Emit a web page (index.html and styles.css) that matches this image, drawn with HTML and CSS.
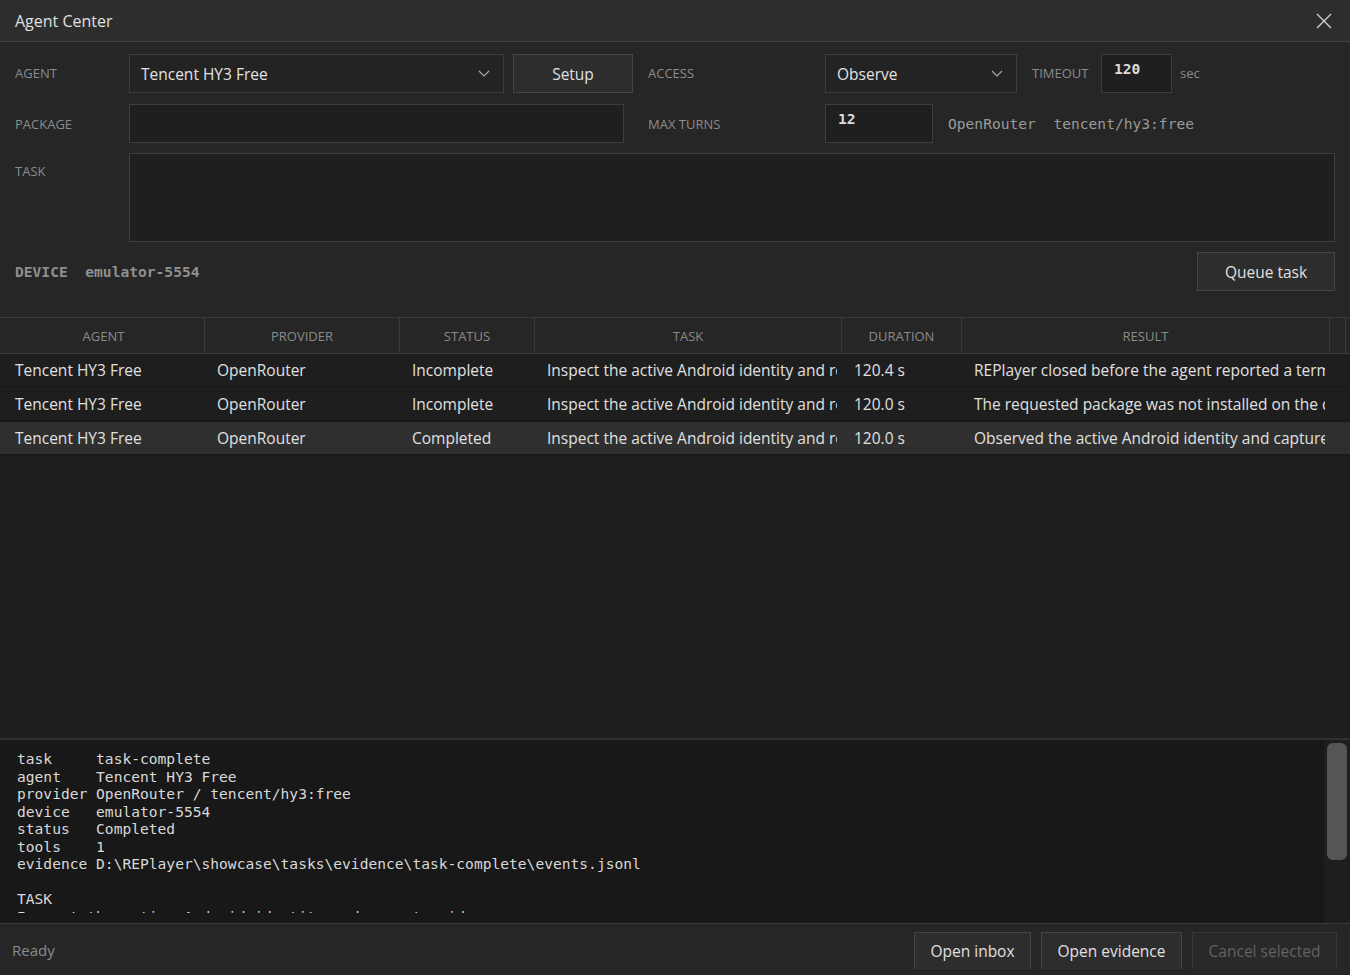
FILE: index.html
```html
<!DOCTYPE html>
<html lang="en">
<head>
    <meta charset="UTF-8">
    <title>Agent Center</title>
    <link rel="stylesheet" href="styles.css">
</head>
<body>
    <div class="window">
        <div class="titlebar">
            <span class="title">Agent Center</span>
            <svg class="close" width="16" height="16" viewBox="0 0 16 16">
                <path d="M1 1 L15 15 M15 1 L1 15" stroke="#cfcfcf" stroke-width="1.4" fill="none"/>
            </svg>
        </div>

        <div class="form">
            <div class="row row-first">
                <span class="label w-label">Agent</span>
                <div class="combo w-agent">
                    <span>Tencent HY3 Free</span>
                    <svg class="chev" width="12" height="7" viewBox="0 0 12 7"><path d="M1 1 L6 6 L11 1" stroke="#aaa" stroke-width="1.1" fill="none"/></svg>
                </div>
                <button class="button w-setup">Setup</button>
                <span class="label w-access">Access</span>
                <div class="combo w-observe">
                    <span>Observe</span>
                    <svg class="chev" width="12" height="7" viewBox="0 0 12 7"><path d="M1 1 L6 6 L11 1" stroke="#aaa" stroke-width="1.1" fill="none"/></svg>
                </div>
                <span class="label w-timeout">Timeout</span>
                <div class="numbox w-num1">120</div>
                <span class="unit">sec</span>
            </div>

            <div class="row">
                <span class="label w-label">Package</span>
                <div class="field w-package"></div>
                <span class="label w-turns">Max turns</span>
                <div class="numbox w-num2">12</div>
                <span class="mono-note">OpenRouter  tencent/hy3:free</span>
            </div>

            <div class="row row-task">
                <span class="label w-label label-top">Task</span>
                <div class="field w-task"></div>
            </div>

            <div class="row">
                <span class="device">DEVICE  emulator-5554</span>
                <button class="button w-queue">Queue task</button>
            </div>
        </div>

        <div class="grid-area">
            <div class="thead">
                <div>AGENT</div>
                <div>PROVIDER</div>
                <div>STATUS</div>
                <div>TASK</div>
                <div>DURATION</div>
                <div>RESULT</div>
                <div></div>
            </div>
            <div class="trow">
                <div>Tencent HY3 Free</div>
                <div>OpenRouter</div>
                <div>Incomplete</div>
                <div>Inspect the active Android identity and report evidence</div>
                <div>120.4 s</div>
                <div>REPlayer closed before the agent reported a terminal result</div>
            </div>
            <div class="trow">
                <div>Tencent HY3 Free</div>
                <div>OpenRouter</div>
                <div>Incomplete</div>
                <div>Inspect the active Android identity and report evidence</div>
                <div>120.0 s</div>
                <div>The requested package was not installed on the device</div>
            </div>
            <div class="trow selected">
                <div>Tencent HY3 Free</div>
                <div>OpenRouter</div>
                <div>Completed</div>
                <div>Inspect the active Android identity and report evidence</div>
                <div>120.0 s</div>
                <div>Observed the active Android identity and captured evidence</div>
            </div>
        </div>

        <div class="detail">
            <pre class="detail-text">task     task-complete
agent    Tencent HY3 Free
provider OpenRouter / tencent/hy3:free
device   emulator-5554
status   Completed
tools    1
evidence D:\REPlayer\showcase\tasks\evidence\task-complete\events.jsonl

TASK
Inspect the active Android identity and report evidence</pre>
            <div class="scrolltrack"><div class="thumb"></div></div>
        </div>

        <div class="footer">
            <span class="status">Ready</span>
            <div class="actions">
                <button class="button btn-foot w-inbox">Open inbox</button>
                <button class="button btn-foot w-evid">Open evidence</button>
                <button class="button btn-foot w-cancel" disabled>Cancel selected</button>
            </div>
        </div>
    </div>
</body>
</html>
```

FILE: styles.css
```css
/* Agent Center - dark dialog */
body {
    margin: 0;
    padding: 0;
    background-color: #262626;
    font-family: "Open Sans", "Noto Sans", sans-serif;
    color: #dedede;
    overflow: hidden;
}

.window {
    width: 1350px;
    height: 975px;
    display: flex;
    flex-direction: column;
}

.titlebar {
    height: 41px;
    background-color: #2d2d2d;
    border-bottom: 1px solid #414141;
    display: flex;
    align-items: center;
    justify-content: space-between;
    padding: 0 18px 0 15px;
    flex-shrink: 0;
}

.title {
    font-size: 16px;
    color: #e0e0e0;
}

/* Formulario */
.form {
    padding: 12px 0 0 15px;
    display: flex;
    flex-direction: column;
    gap: 10px;
}

.row {
    display: flex;
    align-items: center;
    height: 39px;
}

.row-first {
    height: 40px;
    align-items: flex-start;
}

.row-first .label,
.row-first .unit {
    line-height: 39px;
}

.row-task {
    height: 89px;
    align-items: flex-start;
}

.label {
    font-size: 13px;
    color: #8c8c8c;
    text-transform: uppercase;
    flex-shrink: 0;
}

.label-top {
    padding-top: 9px;
}

.w-label { width: 114px; }
.w-access { width: 177px; margin-left: 15px; }
.w-timeout { width: 69px; margin-left: 15px; }
.w-turns { width: 177px; margin-left: 24px; }

.combo,
.field,
.numbox {
    box-sizing: border-box;
    height: 39px;
    background-color: #1f1f1f;
    border: 1px solid #3d3d3d;
    flex-shrink: 0;
}

.combo {
    display: flex;
    align-items: center;
    justify-content: space-between;
    padding: 0 13px 0 11px;
    font-size: 15.5px;
    color: #e2e2e2;
    background-color: #232323;
}

.w-agent { width: 375px; }
.w-observe { width: 192px; }
.w-package { width: 495px; }
.w-task { width: 1206px; height: 89px; }

.numbox {
    font-family: "DejaVu Sans Mono", monospace;
    font-size: 14.6px;
    font-weight: bold;
    color: #dcdcdc;
    padding: 5px 0 0 12px;
}

.w-num1 { width: 71px; }
.w-num2 { width: 108px; }

.unit {
    margin-left: 8px;
    font-size: 13px;
    color: #8c8c8c;
}

.mono-note {
    margin-left: 15px;
    font-family: "DejaVu Sans Mono", monospace;
    font-size: 14.6px;
    color: #9a9a9a;
    white-space: pre;
}

.device {
    font-family: "DejaVu Sans Mono", monospace;
    font-size: 14.6px;
    font-weight: bold;
    color: #8f8f8f;
    white-space: pre;
    flex: 1;
}

.button {
    box-sizing: border-box;
    height: 39px;
    background-color: #2d2d2d;
    border: 1px solid #454545;
    color: #e0e0e0;
    font-family: "Open Sans", "Noto Sans", sans-serif;
    font-size: 15.5px;
    padding: 0;
    flex-shrink: 0;
}

.w-setup { width: 120px; margin-left: 9px; }
.w-queue { width: 138px; margin-right: 15px; }

/* Tabela */
.grid-area {
    margin-top: 26px;
    background-color: #1e1e1e;
    flex: 1;
}

.thead,
.trow {
    display: grid;
    grid-template-columns: 202px 195px 135px 307px 120px 368px 16px;
    padding-left: 3px;
}

.thead {
    height: 37px;
    background-color: #262626;
    border-top: 1px solid #3a3a3a;
    border-bottom: 1px solid #3a3a3a;
    box-sizing: border-box;
}

.thead div {
    display: flex;
    align-items: center;
    justify-content: center;
    font-size: 13px;
    color: #8a8a8a;
    border-right: 1px solid #3a3a3a;
    background-color: #262626;
}

.trow {
    height: 34px;
    border-bottom: 2px solid #1a1a1a;
    box-sizing: border-box;
    background-color: #1e1e1e;
}

.trow.selected {
    background-color: #2f2f2f;
}

.trow div {
    display: flex;
    align-items: center;
    padding-left: 12px;
    margin-right: 5px;
    font-size: 15.5px;
    color: #e0e0e0;
    white-space: nowrap;
    overflow: hidden;
}

/* Painel de detalhes */
.detail {
    height: 183px;
    border-top: 2px solid #303030;
    background-color: #181818;
    display: flex;
    flex-shrink: 0;
}

.detail-text {
    flex: 1;
    margin: 0;
    padding: 10px 0 0 17px;
    height: 173px;
    box-sizing: border-box;
    overflow: hidden;
    font-family: "DejaVu Sans Mono", monospace;
    font-size: 14.6px;
    line-height: 17.5px;
    color: #d8d8d8;
}

.scrolltrack {
    width: 26px;
    background-color: #1e1e1e;
    padding: 3px 3px 0 3px;
    box-sizing: border-box;
}

.thumb {
    height: 117px;
    background-color: #555555;
    border-radius: 6px;
}

/* Rodape */
.footer {
    height: 51px;
    border-top: 1px solid #393939;
    background-color: #262626;
    display: flex;
    justify-content: space-between;
    align-items: flex-start;
    padding: 0 13px 0 12px;
    flex-shrink: 0;
}

.status {
    font-size: 15px;
    color: #8c8c8c;
    margin-top: 16px;
}

.actions {
    display: flex;
    gap: 10px;
    margin-top: 8px;
}

.btn-foot {
    height: 37px;
    border-bottom: 0;
}

.w-inbox { width: 117px; }
.w-evid { width: 141px; }
.w-cancel { width: 145px; color: #626262; border-color: #363636; background-color: #292929; }
```
